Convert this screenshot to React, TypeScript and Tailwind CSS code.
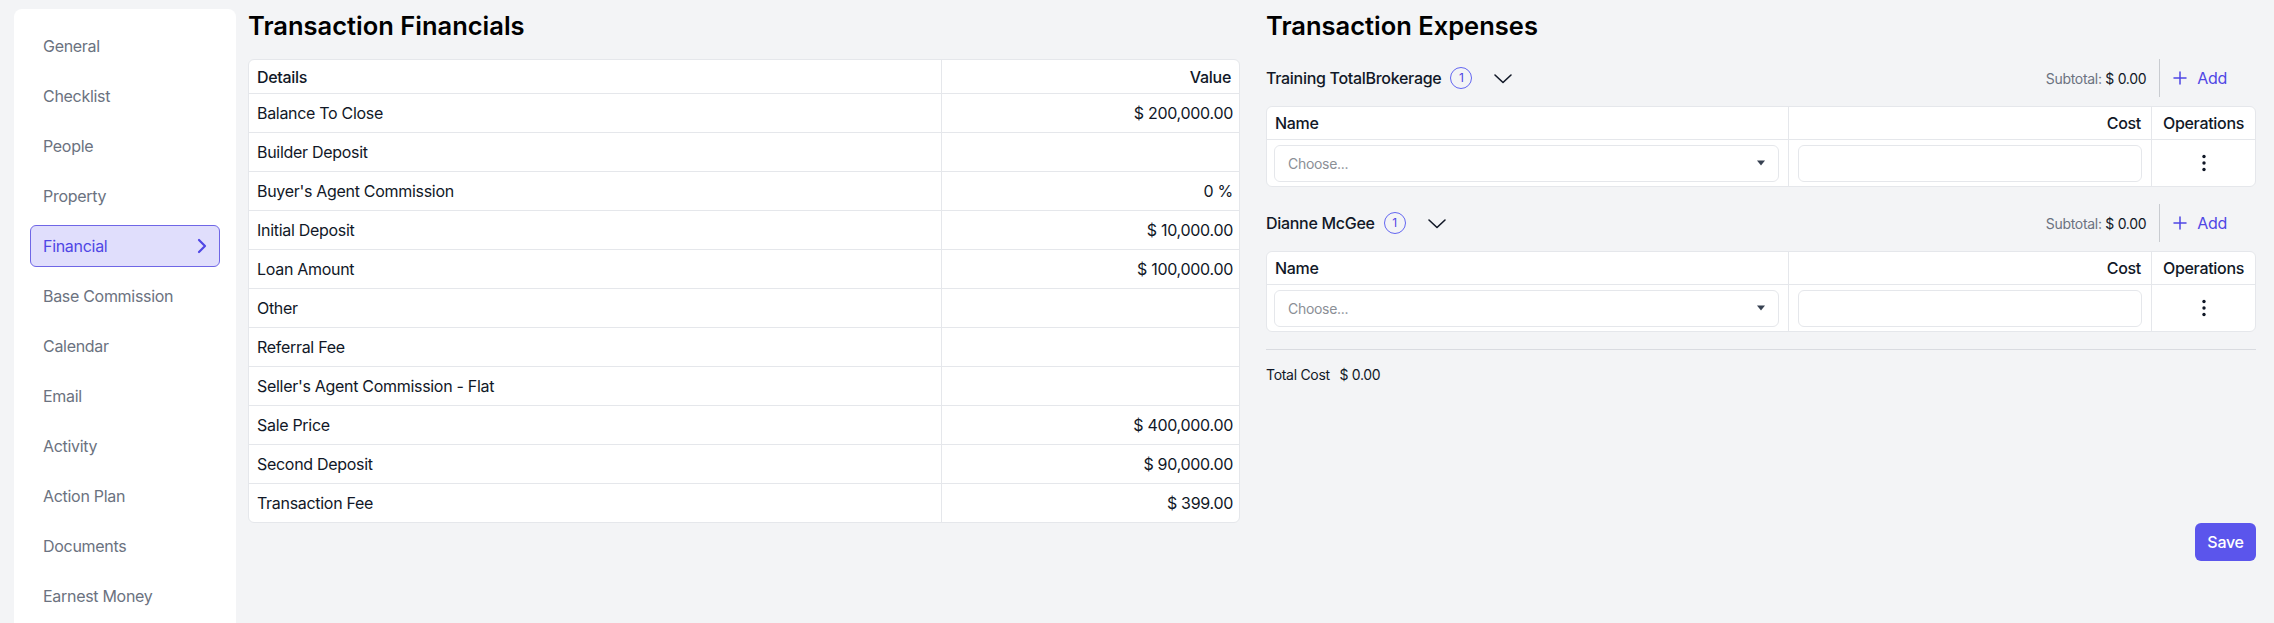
import React from "react";

const nav = [
  "General",
  "Checklist",
  "People",
  "Property",
  "Financial",
  "Base Commission",
  "Calendar",
  "Email",
  "Activity",
  "Action Plan",
  "Documents",
  "Earnest Money",
];

const financials: [string, string][] = [
  ["Balance To Close", "$ 200,000.00"],
  ["Builder Deposit", ""],
  ["Buyer's Agent Commission", "0 %"],
  ["Initial Deposit", "$ 10,000.00"],
  ["Loan Amount", "$ 100,000.00"],
  ["Other", ""],
  ["Referral Fee", ""],
  ["Seller's Agent Commission - Flat", ""],
  ["Sale Price", "$ 400,000.00"],
  ["Second Deposit", "$ 90,000.00"],
  ["Transaction Fee", "$ 399.00"],
];

function ChevronRight() {
  return (
    <svg width="10" height="16" viewBox="0 0 10 16" fill="none">
      <path d="M2 2l6 6-6 6" stroke="#4f46e5" strokeWidth="2.2" strokeLinecap="round" strokeLinejoin="round" />
    </svg>
  );
}

function ChevronDown() {
  return (
    <svg width="20" height="11" viewBox="0 0 20 11" fill="none">
      <path d="M2 2l8 7.5L18 2" stroke="#111827" strokeWidth="1.6" strokeLinecap="round" strokeLinejoin="round" />
    </svg>
  );
}

function PlusIcon() {
  return (
    <svg width="14" height="14" viewBox="0 0 14 14" fill="none">
      <path d="M7 1v12M1 7h12" stroke="#4f46e5" strokeWidth="1.5" strokeLinecap="round" />
    </svg>
  );
}

function Kebab() {
  return (
    <svg width="6" height="18" viewBox="0 0 6 18">
      <circle cx="3" cy="2.5" r="1.7" fill="#111827" />
      <circle cx="3" cy="9" r="1.7" fill="#111827" />
      <circle cx="3" cy="15.5" r="1.7" fill="#111827" />
    </svg>
  );
}

function Caret() {
  return (
    <svg width="10" height="6" viewBox="0 0 10 6">
      <path d="M1 0.5h8L5 5.5z" fill="#374151" />
    </svg>
  );
}

function ExpenseSection({ name, first }: { name: string; first?: boolean }) {
  return (
    <div className={first ? "" : "mt-[17px]"}>
      <div className="flex h-[38px] items-center justify-between">
        <div className="flex items-center">
          <span className="text-[16px] font-medium text-[#111827]">{name}</span>
          <span className="ml-[9px] flex h-[22px] w-[22px] items-center justify-center rounded-full border border-[#6366f1] text-[12px] tracking-normal text-[#4f46e5]">
            1
          </span>
          <span className="ml-[21px] flex items-center">
            <ChevronDown />
          </span>
        </div>
        <div className="flex h-full items-center">
          <span className="pr-[13px] text-[14px] text-[#6b7280]">
            Subtotal: <span className="text-[#111827]">$ 0.00</span>
          </span>
          <div className="h-full border-l border-[#c9ccd1]" />
          <button className="flex items-center gap-[10px] pl-[13px] pr-[29px] text-[16px] text-[#4f46e5]">
            <PlusIcon />
            Add
          </button>
        </div>
      </div>
      <div className="mt-[9px] overflow-hidden rounded-md border border-[#e5e7eb] bg-white">
        <div className="flex h-[32px] items-center text-[16px] font-medium text-[#111827]">
          <div className="flex h-full w-[521px] items-center px-[8px]">Name</div>
          <div className="flex h-full flex-1 items-center justify-end border-l border-[#e5e7eb] px-[10px]">Cost</div>
          <div className="flex h-full w-[104px] items-center justify-center border-l border-[#e5e7eb]">Operations</div>
        </div>
        <div className="flex h-[47px] items-center border-t border-[#e5e7eb]">
          <div className="flex h-full w-[521px] items-center pl-[7px] pr-[9px]">
            <div className="flex h-[37px] w-full items-center justify-between rounded-md border border-[#e5e7eb] bg-white pl-[13px] pr-[12px] text-[14px] text-[#8b8f96]">
              <span>Choose...</span>
              <Caret />
            </div>
          </div>
          <div className="flex h-full flex-1 items-center border-l border-[#e5e7eb] px-[9px]">
            <div className="h-[37px] w-full rounded-md border border-[#e5e7eb] bg-white" />
          </div>
          <div className="flex h-full w-[104px] items-center justify-center border-l border-[#e5e7eb]">
            <Kebab />
          </div>
        </div>
      </div>
    </div>
  );
}

export default function App() {
  return (
    <div
      className="flex h-[623px] w-[2274px] overflow-hidden bg-[#f3f4f6] tracking-[-0.3px] text-[#111827]"
      style={{ fontFamily: "Inter, 'Noto Sans', 'Liberation Sans', sans-serif" }}
    >
      <aside className="ml-[14px] mt-[9px] flex w-[222px] shrink-0 flex-col gap-[8px] rounded-t-lg bg-white px-[16px] pt-[16px]">
        {nav.map((item) =>
          item === "Financial" ? (
            <div
              key={item}
              className="flex h-[42px] shrink-0 items-center justify-between rounded-md border border-[#6f66e6] bg-[#e0defc] pl-[12px] pr-[12px] text-[16px] text-[#4f46e5]"
            >
              <span>{item}</span>
              <ChevronRight />
            </div>
          ) : (
            <div
              key={item}
              className="flex h-[42px] shrink-0 items-center border border-transparent px-[12px] text-[16px] text-[#6b7280]"
            >
              {item}
            </div>
          )
        )}
      </aside>

      <main className="flex flex-1 gap-[26px] pl-[12px] pr-[18px] pt-[8px]">
        <section className="w-[992px] shrink-0">
          <h1 className="mb-[15px] h-[36px] text-[25.5px] font-semibold leading-[36px] tracking-normal text-black">
            Transaction Financials
          </h1>
          <div className="overflow-hidden rounded-md border border-[#e5e7eb] bg-white">
            <div className="flex h-[33px] items-center text-[16px] font-medium">
              <div className="flex h-full flex-1 items-center px-[8px]">Details</div>
              <div className="flex h-full w-[298px] items-center justify-end border-l border-[#e5e7eb] px-[8px]">
                Value
              </div>
            </div>
            {financials.map(([label, value]) => (
              <div key={label} className="flex h-[39px] items-center border-t border-[#e5e7eb] text-[16px]">
                <div className="flex h-full flex-1 items-center px-[8px]">{label}</div>
                <div className="flex h-full w-[298px] items-center justify-end border-l border-[#e5e7eb] px-[6px]">
                  {value}
                </div>
              </div>
            ))}
          </div>
        </section>

        <section className="flex w-[990px] shrink-0 flex-col">
          <h1 className="mb-[15px] h-[36px] text-[25.5px] font-semibold leading-[36px] tracking-normal text-black">
            Transaction Expenses
          </h1>
          <ExpenseSection name="Training TotalBrokerage" first />
          <ExpenseSection name="Dianne McGee" />
          <div className="mt-[17px] border-t border-[#d9dbe0]" />
          <div className="mt-[14px] text-[14px] text-[#111827]">
            Total Cost <span className="ml-[6px]">$ 0.00</span>
          </div>
          <div className="mt-[138px] flex justify-end">
            <button className="h-[38px] w-[61px] rounded-md bg-[#5b55ec] text-[16px] font-medium text-white">
              Save
            </button>
          </div>
        </section>
      </main>
    </div>
  );
}
